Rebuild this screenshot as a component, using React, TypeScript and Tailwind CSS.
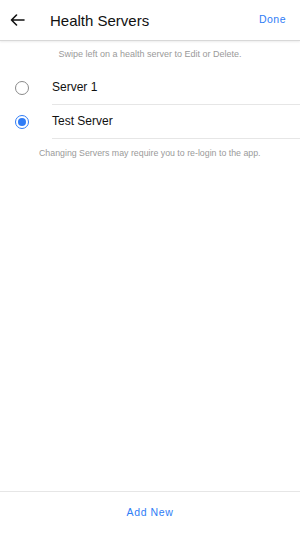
import { useState } from 'react';

const servers = ['Server 1', 'Test Server'];

const Radio = ({ checked }: { checked: boolean }) => (
  <span
    className={`flex h-[14px] w-[14px] items-center justify-center rounded-full border-[1.5px] ${
      checked ? 'border-[#2f7cf6]' : 'border-[#8a8a8a]'
    }`}
  >
    {checked && <span className="h-[8px] w-[8px] rounded-full bg-[#2f7cf6]" />}
  </span>
);

const App = () => {
  const [active, setActive] = useState(1);

  return (
    <div
      className="flex h-[533px] w-[300px] flex-col bg-white text-[#111]"
      style={{ fontFamily: '"Liberation Sans", Arial, sans-serif' }}
    >
      <header className="relative z-10 flex h-[41px] shrink-0 items-center border-b border-[#d8d8d8] shadow-[0_1px_2px_rgba(0,0,0,0.08)]">
        <button type="button" className="ml-[10px] flex h-[20px] w-[16px] items-center">
          <svg width="15" height="12" viewBox="0 0 15 12" fill="none">
            <path d="M14 6H1.5M6.5 1L1.5 6l5 5" stroke="#111" strokeWidth="1.6" strokeLinecap="round" strokeLinejoin="round" />
          </svg>
        </button>
        <h1 className="ml-[24px] text-[15px] leading-none">Health Servers</h1>
        <button type="button" className="ml-auto mr-[14px] text-[10.5px] tracking-[0.5px] text-[#2f7cf6]">
          Done
        </button>
      </header>

      <main className="flex flex-1 flex-col">
        <p className="mt-[7px] text-center text-[9px] text-[#9a9a9a]">
          Swipe left on a health server to Edit or Delete.
        </p>
        <ul className="mt-[9px]">
          {servers.map((name, i) => (
            <li key={name}>
              <button
                type="button"
                onClick={() => setActive(i)}
                className="flex h-[34px] w-full items-center"
              >
                <span className="flex w-[52px] justify-center pr-[9px]">
                  <Radio checked={active === i} />
                </span>
                <span className="flex h-full flex-1 items-center border-b border-[#e6e6e6] text-[12px]">
                  {name}
                </span>
              </button>
            </li>
          ))}
        </ul>
        <p className="mt-[8px] pl-[39px] text-[8.8px] text-[#9a9a9a]">
          Changing Servers may require you to re-login to the app.
        </p>
      </main>

      <footer className="flex h-[42px] shrink-0 items-center justify-center border-t border-[#e6e6e6]">
        <button type="button" className="text-[10.5px] tracking-[0.6px] text-[#2f7cf6]">
          Add New
        </button>
      </footer>
    </div>
  );
};

export default App;
